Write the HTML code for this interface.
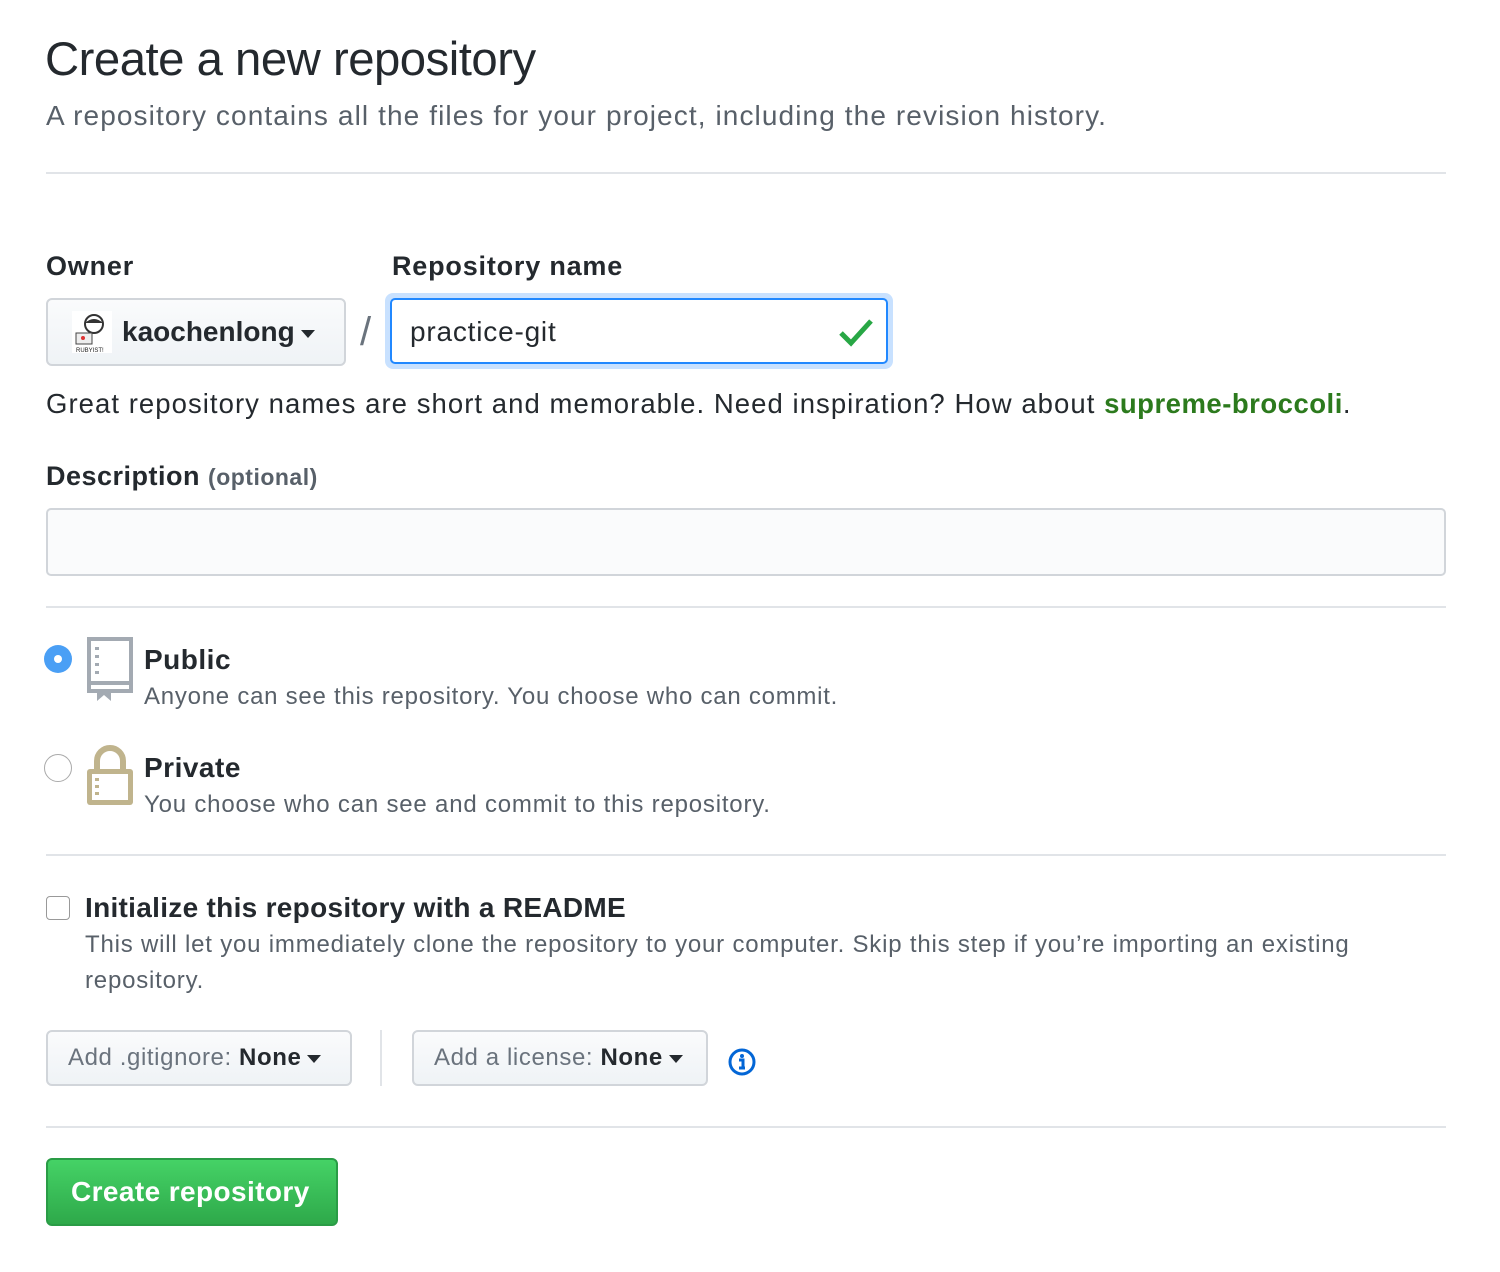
<!DOCTYPE html>
<html><head><meta charset="utf-8"><style>
body{margin:0;width:1500px;height:1272px;background:#fff;font-family:"Liberation Sans",Arial,sans-serif;color:#24292e;position:relative;overflow:hidden}
.a{position:absolute;white-space:nowrap}
.hr{position:absolute;left:46px;width:1400px;height:2px;background:#e1e4e8}
.btn{position:absolute;background:linear-gradient(#fafbfc,#eff3f6);border:2px solid #d1d5da;border-radius:6px;box-sizing:border-box}
.caret{display:inline-block;width:0;height:0;border-left:7px solid transparent;border-right:7px solid transparent;border-top:8px solid #24292e;vertical-align:middle;margin-left:6px}
.muted{color:#586069}
</style></head><body>
<div class="a" style="left:45px;top:30px;font-size:47.3px;line-height:60px;letter-spacing:-0.5px">Create a new repository</div>
<div class="a muted" style="left:46px;top:99px;font-size:28px;line-height:34px;letter-spacing:1.1px">A repository contains all the files for your project, including the revision history.</div>
<div class="hr" style="top:172px"></div>

<div class="a" style="left:46px;top:249px;font-size:27px;line-height:34px;font-weight:bold;letter-spacing:0.8px">Owner</div>
<div class="a" style="left:392px;top:249px;font-size:27px;line-height:34px;font-weight:bold;letter-spacing:0.8px">Repository name</div>

<div class="btn" style="left:46px;top:298px;width:300px;height:68px"></div>
<svg class="a" style="left:72px;top:311px" width="40" height="42" viewBox="0 0 40 42"><rect width="40" height="42" fill="#fff"/><circle cx="22" cy="13" r="9" fill="none" stroke="#333" stroke-width="2"/><path d="M13 12 q9-8 18 0" fill="#333"/><rect x="4" y="22" width="16" height="11" fill="#eee" stroke="#444"/><circle cx="11" cy="27" r="2" fill="#d33"/><text x="4" y="41" font-size="6" font-family="Liberation Sans" fill="#222">RUBYIST!</text></svg>
<div class="a" style="left:122px;top:314px;font-size:28px;line-height:36px;font-weight:bold">kaochenlong<span class="caret"></span></div>
<div class="a" style="left:360px;top:308px;font-size:40px;line-height:48px;color:#6a737d">/</div>
<div class="a" style="left:385px;top:293px;width:508px;height:76px;border-radius:8px;background:#c8e1ff;"></div>
<div class="a" style="left:390px;top:298px;width:498px;height:66px;box-sizing:border-box;border:2px solid #2188ff;border-radius:5px;background:#fff"></div>
<div class="a" style="left:410px;top:314px;font-size:28px;line-height:36px;letter-spacing:0.8px">practice-git</div>
<svg class="a" style="left:838px;top:316px" width="36" height="32" viewBox="0 0 36 32"><path d="M3 17 L13 27 L33 5" fill="none" stroke="#28a745" stroke-width="5"/></svg>

<div class="a" style="left:46px;top:387px;font-size:27.5px;line-height:34px;letter-spacing:1.05px">Great repository names are short and memorable. Need inspiration? How about <b style="color:#2c7a1d;letter-spacing:0.5px">supreme-broccoli</b>.</div>

<div class="a" style="left:46px;top:459px;font-size:27px;line-height:34px;font-weight:bold;letter-spacing:0.5px">Description <span class="muted" style="font-size:23px">(optional)</span></div>
<div class="a" style="left:46px;top:508px;width:1400px;height:68px;box-sizing:border-box;border:2px solid #d1d5da;border-radius:5px;background:#fafbfc"></div>
<div class="hr" style="top:606px"></div>

<div class="a" style="left:44px;top:645px;width:28px;height:28px;border-radius:50%;background:#4a9ff5;"></div>
<div class="a" style="left:54px;top:655px;width:8px;height:8px;border-radius:50%;background:#fff"></div>
<svg class="a" style="left:85px;top:637px" width="50" height="66" viewBox="0 0 50 66"><path d="M4 2 H46 V54 H4 Z" fill="none" stroke="#a3aab2" stroke-width="4"/><path d="M2 46 H48" stroke="#a3aab2" stroke-width="4"/><path d="M12 10 v3 M12 18 v3 M12 26 v3 M12 34 v3" stroke="#a3aab2" stroke-width="4"/><path d="M12 52 H26 V64 L19 58 L12 64 Z" fill="#a3aab2"/></svg>
<div class="a" style="left:144px;top:643px;font-size:28px;line-height:34px;font-weight:bold;letter-spacing:0.5px">Public</div>
<div class="a muted" style="left:144px;top:681px;font-size:24px;line-height:32px;letter-spacing:0.75px">Anyone can see this repository. You choose who can commit.</div>

<div class="a" style="left:44px;top:754px;width:28px;height:28px;border-radius:50%;border:1.5px solid #aaa;box-sizing:border-box;background:#fff"></div>
<svg class="a" style="left:85px;top:745px" width="50" height="62" viewBox="0 0 50 62"><path d="M12 24 V16 a13 13 0 0 1 26 0 V24" fill="none" stroke="#c0b48d" stroke-width="6"/><rect x="2" y="24" width="46" height="36" rx="3" fill="#c0b48d"/><rect x="7" y="29" width="36" height="26" fill="#fff"/><path d="M12 33 v3 M12 40 v3 M12 47 v3" stroke="#c0b48d" stroke-width="4"/></svg>
<div class="a" style="left:144px;top:751px;font-size:28px;line-height:34px;font-weight:bold;letter-spacing:0.5px">Private</div>
<div class="a muted" style="left:144px;top:789px;font-size:24px;line-height:32px;letter-spacing:0.8px">You choose who can see and commit to this repository.</div>
<div class="hr" style="top:854px"></div>

<div class="a" style="left:46px;top:896px;width:24px;height:24px;border:1.5px solid #999;border-radius:4px;box-sizing:border-box;background:#fff"></div>
<div class="a" style="left:85px;top:891px;font-size:28px;line-height:34px;font-weight:bold;letter-spacing:0.3px">Initialize this repository with a README</div>
<div class="a muted" style="left:85px;top:927px;font-size:24px;line-height:36px;white-space:normal;width:1300px;letter-spacing:0.8px">This will let you immediately clone the repository to your computer. Skip this step if you’re importing an existing repository.</div>

<div class="btn" style="left:46px;top:1030px;width:306px;height:56px"></div>
<div class="a" style="left:68px;top:1041px;font-size:24px;line-height:34px;color:#6a737d;letter-spacing:0.6px">Add .gitignore: <b style="color:#24292e">None</b><span class="caret"></span></div>
<div class="a" style="left:380px;top:1030px;width:2px;height:56px;background:#e1e4e8"></div>
<div class="btn" style="left:412px;top:1030px;width:296px;height:56px"></div>
<div class="a" style="left:434px;top:1041px;font-size:24px;line-height:34px;color:#6a737d;letter-spacing:0.6px">Add a license: <b style="color:#24292e">None</b><span class="caret"></span></div>
<svg class="a" style="left:727px;top:1047px" width="30" height="30" viewBox="0 0 30 30"><circle cx="15" cy="15" r="12" fill="none" stroke="#0366d6" stroke-width="3"/><circle cx="15" cy="9" r="2" fill="#0366d6"/><path d="M12 13 H16 V21 M12 21 H18" fill="none" stroke="#0366d6" stroke-width="3"/></svg>
<div class="hr" style="top:1126px"></div>

<div class="a" style="left:46px;top:1158px;width:292px;height:68px;box-sizing:border-box;border:2px solid #2a9c46;border-radius:6px;background:linear-gradient(#45d266,#2ea94a)"></div>
<div class="a" style="left:71px;top:1174px;font-size:28px;line-height:36px;font-weight:bold;color:#fff;letter-spacing:0.4px">Create repository</div>
</body></html>
